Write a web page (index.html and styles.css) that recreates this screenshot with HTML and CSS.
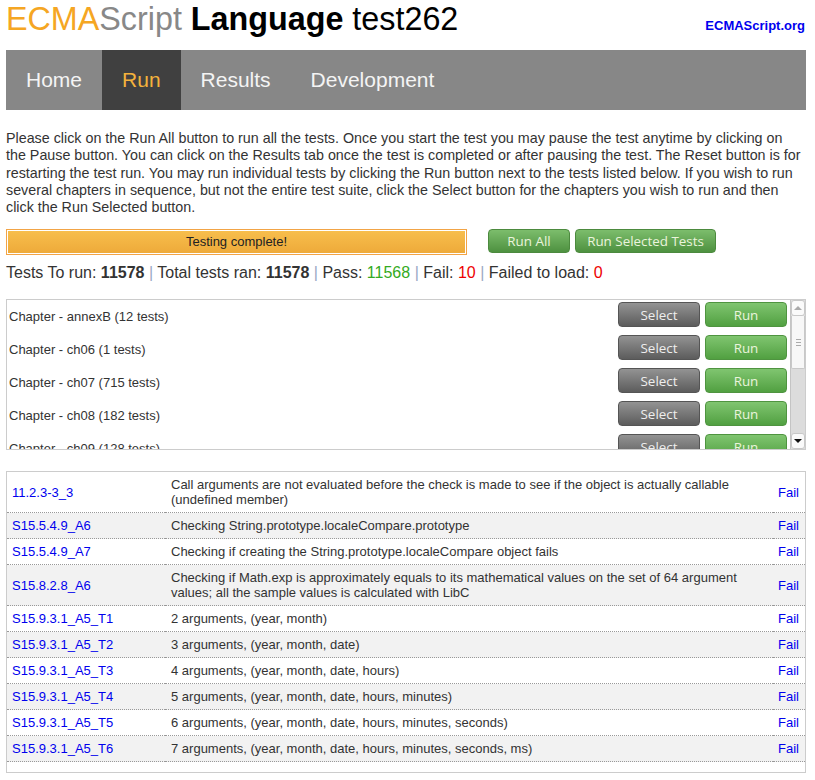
FILE: index.html
```html
<!DOCTYPE html>
<html>
<head>
<meta charset="utf-8">
<title>ECMAScript Language test262</title>
<link rel="stylesheet" href="styles.css">
</head>
<body>
<div class="page">
  <header class="header">
    <h1 class="title"><span class="ecma">ECMA</span><span class="script">Script</span> <b>Language</b> test262</h1>
    <a class="site-link" href="#">ECMAScript.org</a>
  </header>
  <nav class="nav">
    <a class="tab" href="#">Home</a>
    <a class="tab active" href="#">Run</a>
    <a class="tab" href="#">Results</a>
    <a class="tab" href="#">Development</a>
  </nav>
  <p class="intro">Please click on the Run All button to run all the tests. Once you start the test you may pause the test anytime by clicking on the Pause button. You can click on the Results tab once the test is completed or after pausing the test. The Reset button is for restarting the test run. You may run individual tests by clicking the Run button next to the tests listed below. If you wish to run several chapters in sequence, but not the entire test suite, click the Select button for the chapters you wish to run and then click the Run Selected button.</p>
  <div class="controls">
    <div class="progress"><div class="progress-fill">Testing complete!</div></div>
    <div class="actions">
      <button class="btn green">Run All</button>
      <button class="btn green wide-b">Run Selected Tests</button>
    </div>
  </div>
  <div class="stats">Tests To run: <b>11578</b> <span class="sep">|</span> Total tests ran: <b>11578</b> <span class="sep">|</span> Pass: <span class="pass">11568</span> <span class="sep">|</span> Fail: <span class="fail">10</span> <span class="sep">|</span> Failed to load: <span class="fail">0</span></div>
  <div class="chapters">
    <div class="chapter-rows">
      <div class="chapter"><span class="chapter-name">Chapter - annexB (12 tests)</span><button class="btn gray">Select</button><button class="btn green">Run</button></div>
      <div class="chapter"><span class="chapter-name">Chapter - ch06 (1 tests)</span><button class="btn gray">Select</button><button class="btn green">Run</button></div>
      <div class="chapter"><span class="chapter-name">Chapter - ch07 (715 tests)</span><button class="btn gray">Select</button><button class="btn green">Run</button></div>
      <div class="chapter"><span class="chapter-name">Chapter - ch08 (182 tests)</span><button class="btn gray">Select</button><button class="btn green">Run</button></div>
      <div class="chapter"><span class="chapter-name">Chapter - ch09 (128 tests)</span><button class="btn gray">Select</button><button class="btn green">Run</button></div>
      <div class="chapter"><span class="chapter-name">Chapter - ch10 (431 tests)</span><button class="btn gray">Select</button><button class="btn green">Run</button></div>
      <div class="chapter"><span class="chapter-name">Chapter - ch11 (1412 tests)</span><button class="btn gray">Select</button><button class="btn green">Run</button></div>
      <div class="chapter"><span class="chapter-name">Chapter - ch12 (1092 tests)</span><button class="btn gray">Select</button><button class="btn green">Run</button></div>
    </div>
    <div class="scrollbar">
      <div class="sb-btn"><span class="arrow-up"></span></div>
      <div class="sb-track">
        <div class="sb-thumb"><span class="grip"></span><span class="grip"></span><span class="grip"></span></div>
      </div>
      <div class="sb-btn"><span class="arrow-down"></span></div>
    </div>
  </div>
  <div class="results">
    <table class="results-table">
      <tr><td class="c-id"><a href="#">11.2.3-3_3</a></td><td class="c-desc">Call arguments are not evaluated before the check is made to see if the object is actually callable (undefined member)</td><td class="c-res"><a href="#">Fail</a></td></tr>
      <tr><td class="c-id"><a href="#">S15.5.4.9_A6</a></td><td class="c-desc">Checking String.prototype.localeCompare.prototype</td><td class="c-res"><a href="#">Fail</a></td></tr>
      <tr><td class="c-id"><a href="#">S15.5.4.9_A7</a></td><td class="c-desc">Checking if creating the String.prototype.localeCompare object fails</td><td class="c-res"><a href="#">Fail</a></td></tr>
      <tr><td class="c-id"><a href="#">S15.8.2.8_A6</a></td><td class="c-desc">Checking if Math.exp is approximately equals to its mathematical values on the set of 64 argument values; all the sample values is calculated with LibC</td><td class="c-res"><a href="#">Fail</a></td></tr>
      <tr><td class="c-id"><a href="#">S15.9.3.1_A5_T1</a></td><td class="c-desc">2 arguments, (year, month)</td><td class="c-res"><a href="#">Fail</a></td></tr>
      <tr><td class="c-id"><a href="#">S15.9.3.1_A5_T2</a></td><td class="c-desc">3 arguments, (year, month, date)</td><td class="c-res"><a href="#">Fail</a></td></tr>
      <tr><td class="c-id"><a href="#">S15.9.3.1_A5_T3</a></td><td class="c-desc">4 arguments, (year, month, date, hours)</td><td class="c-res"><a href="#">Fail</a></td></tr>
      <tr><td class="c-id"><a href="#">S15.9.3.1_A5_T4</a></td><td class="c-desc">5 arguments, (year, month, date, hours, minutes)</td><td class="c-res"><a href="#">Fail</a></td></tr>
      <tr><td class="c-id"><a href="#">S15.9.3.1_A5_T5</a></td><td class="c-desc">6 arguments, (year, month, date, hours, minutes, seconds)</td><td class="c-res"><a href="#">Fail</a></td></tr>
      <tr><td class="c-id"><a href="#">S15.9.3.1_A5_T6</a></td><td class="c-desc">7 arguments, (year, month, date, hours, minutes, seconds, ms)</td><td class="c-res"><a href="#">Fail</a></td></tr>
    </table>
  </div>
</div>
</body>
</html>
```
FILE: styles.css
```css
html, body {
  margin: 0;
  padding: 0;
  background: #fff;
}
body {
  font-family: "Liberation Sans", Arial, sans-serif;
  color: #333;
}
.page {
  width: 800px;
  margin: 0 0 0 6px;
}
.header {
  display: flex;
  justify-content: space-between;
  align-items: baseline;
  height: 50px;
  padding-top: 1px;
  box-sizing: border-box;
}
.title {
  margin: 0;
  font-size: 32.3px;
  font-weight: normal;
  color: #000;
  line-height: 37px;
}
.title b { font-weight: bold; }
.ecma { color: #f5a623; }
.script { color: #888; }
.site-link {
  font-size: 13px;
  font-weight: bold;
  color: #0000ee;
  text-decoration: none;
  margin-right: 1px;
}
.nav {
  display: flex;
  background: #878787;
  height: 60px;
}
.tab {
  display: block;
  padding: 0 20px;
  line-height: 60px;
  font-size: 21px;
  color: #f4f4f4;
  text-decoration: none;
}
.tab.active {
  background: #404040;
  color: #f4b23c;
}
.intro {
  margin: 20px 0 0 0;
  font-size: 14.3px;
  line-height: 17.25px;
  color: #333;
}
.controls {
  display: flex;
  align-items: flex-start;
  margin-top: 13px;
}
.progress {
  height: 22px;
  border: 1px solid #f2a446;
  padding: 1px;
  width: 457px;
}
.progress-fill {
  height: 22px;
  background: linear-gradient(#f7be4c, #eeaa3a);
  font-size: 13px;
  color: #222;
  text-align: center;
  line-height: 22px;
}
.actions {
  display: flex;
  gap: 5px;
  margin-left: 21px;
}
.btn {
  font-family: "Open Sans", sans-serif;
  font-size: 13.4px;
  height: 24px;
  width: 82px;
  padding: 0;
  border-radius: 4px;
  cursor: pointer;
  line-height: 22px;
}
.btn.green {
  background: linear-gradient(#7cbd6c, #4e9140);
  border: 1px solid #4c8a3e;
  color: #eaf4dc;
}
.btn.gray {
  background: linear-gradient(#939393, #5c5c5c);
  border: 1px solid #555;
  color: #eee;
}
.btn.wide-b { width: 141px; }
.stats {
  font-size: 16px;
  margin-top: 8px;
  line-height: 19px;
  color: #333;
}
.stats b { font-weight: bold; }
.sep { color: #9aa8c4; }
.pass { color: #33aa22; }
.fail { color: #ee0000; }
.chapters {
  display: flex;
  margin-top: 17px;
  border: 1px solid #ccc;
  height: 149px;
  overflow: hidden;
}
.chapter-rows {
  flex: 1;
  overflow: hidden;
}
.chapter {
  display: flex;
  align-items: flex-start;
  height: 33px;
  box-sizing: border-box;
  padding: 2px 3px 0 2px;
  gap: 5px;
}
.chapter .btn { height: 25px; }
.chapter .btn.green {
  background: linear-gradient(#80c570, #51a041);
  border-color: #4f9440;
}
.chapter-name {
  flex: 1;
  font-size: 13px;
  line-height: 15px;
  color: #333;
  padding-top: 7px;
}
.scrollbar {
  width: 15px;
  display: flex;
  flex-direction: column;
  background: #dcdcdc;
  border-left: 1px solid #c4c4c4;
  box-sizing: border-box;
}
.sb-btn {
  height: 14px;
  background: #fafafa;
  border: 1px solid #c8c8c8;
  border-radius: 3px;
  display: flex;
  align-items: center;
  justify-content: center;
}
.arrow-up {
  width: 0;
  height: 0;
  border-left: 4px solid transparent;
  border-right: 4px solid transparent;
  border-bottom: 4px solid #aaa;
}
.arrow-down {
  width: 0;
  height: 0;
  border-left: 4px solid transparent;
  border-right: 4px solid transparent;
  border-top: 4px solid #111;
}
.sb-track {
  flex: 1;
}
.sb-thumb {
  height: 52px;
  background: #f7f7f7;
  border: 1px solid #c8c8c8;
  border-top: none;
  border-radius: 0 0 2px 2px;
  display: flex;
  flex-direction: column;
  align-items: center;
  justify-content: center;
  gap: 2px;
}
.grip {
  width: 5px;
  height: 1px;
  background: #aaa;
}
.results {
  margin-top: 21px;
  border: 1px solid #ccc;
  padding-bottom: 10px;
}
.results-table {
  width: 100%;
  border-collapse: collapse;
  font-size: 13px;
  line-height: 15px;
}
.results-table tr:nth-child(even) { background: #f2f2f2; }
.results-table td {
  border-bottom: 1px dotted #999;
  padding: 5px 6px;
  vertical-align: middle;
  color: #333;
}
.results-table a {
  color: #0000ee;
  text-decoration: none;
}
.c-id {
  width: 147px;
  padding-left: 5px !important;
}
.c-res {
  width: 21px;
  text-align: right;
  padding-left: 5px !important;
}
```
